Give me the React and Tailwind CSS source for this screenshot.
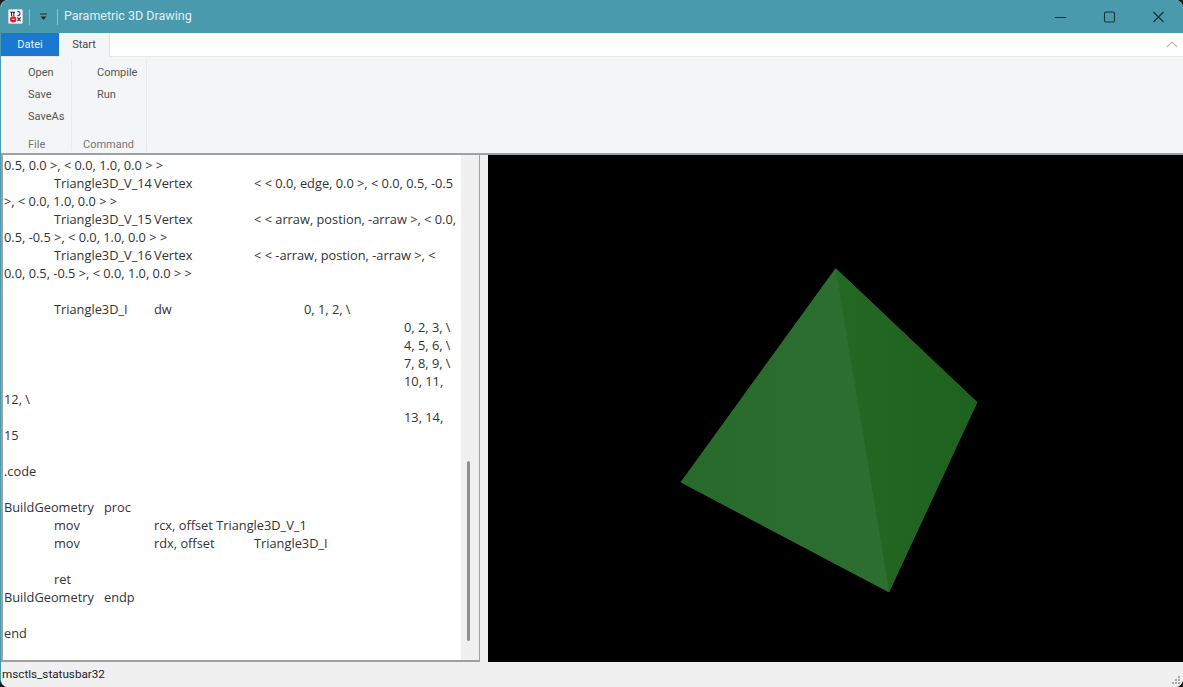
import React from "react";

const code = [
  "0.5, 0.0 >, < 0.0, 1.0, 0.0 > >",
  "\tTriangle3D_V_14\tVertex\t\t< < 0.0, edge, 0.0 >, < 0.0, 0.5, -0.5",
  ">, < 0.0, 1.0, 0.0 > >",
  "\tTriangle3D_V_15\tVertex\t\t< < arraw, postion, -arraw >, < 0.0,",
  "0.5, -0.5 >, < 0.0, 1.0, 0.0 > >",
  "\tTriangle3D_V_16\tVertex\t\t< < -arraw, postion, -arraw >, <",
  "0.0, 0.5, -0.5 >, < 0.0, 1.0, 0.0 > >",
  "",
  "\tTriangle3D_I\tdw\t\t\t0, 1, 2, \\",
  "\t\t\t\t\t\t\t\t0, 2, 3, \\",
  "\t\t\t\t\t\t\t\t4, 5, 6, \\",
  "\t\t\t\t\t\t\t\t7, 8, 9, \\",
  "\t\t\t\t\t\t\t\t10, 11,",
  "12, \\",
  "\t\t\t\t\t\t\t\t13, 14,",
  "15",
  "",
  ".code",
  "",
  "BuildGeometry\tproc",
  "\tmov\t\trcx, offset Triangle3D_V_1",
  "\tmov\t\trdx, offset\tTriangle3D_I",
  "",
  "\tret",
  "BuildGeometry\tendp",
  "",
  "end",
];

const AppIcon = () => (
  <svg width="15" height="15" viewBox="0 0 16 16">
    <rect x="0.5" y="0.5" width="15" height="15" rx="1.5" fill="#f4f4f6" stroke="#c9d3dc" />
    <path d="M2.5 3.5h5M3.8 3.5v4M6.2 3.5v4" stroke="#222" strokeWidth="1.1" fill="none" />
    <path d="M10 2.5c2.5 0 3.5 2 2.5 3.5-.6.9-1.5 1.2-2.5 1" stroke="#2b3fb5" strokeWidth="1.2" fill="none" />
    <circle cx="5.5" cy="11" r="3.4" fill="#e0202c" />
    <path d="M4 11h3" stroke="#fff" strokeWidth="1" />
    <path d="M10 9l3.5 4M13.5 9L10 13" stroke="#333" strokeWidth="1.2" />
  </svg>
);

const TitleBar = () => (
  <div className="flex h-[33px] shrink-0 items-center bg-[#4a9aad] text-[12.5px] text-[#e2f0f3]">
    <div className="ml-[7px] flex w-[15px] justify-center">
      <AppIcon />
    </div>
    <div className="ml-[6px] h-[16px] w-px bg-[#8fc0cc]" />
    <svg className="ml-[9px]" width="9" height="8" viewBox="0 0 9 8">
      <path d="M1 1h7" stroke="#1c2b30" />
      <path d="M1.5 3.5h6L4.5 7z" fill="#1c2b30" />
    </svg>
    <div className="ml-[9px] h-[16px] w-px bg-[#8fc0cc]" />
    <span className="ml-[6px]">Parametric 3D Drawing</span>
    <div className="ml-auto flex items-center">
      <svg width="49" height="12" viewBox="0 0 49 12">
        <path d="M19 6.5h11" stroke="#17323b" strokeWidth="1" />
      </svg>
      <svg width="49" height="12" viewBox="0 0 49 12">
        <rect x="19.5" y="1" width="10" height="10" rx="1.5" fill="none" stroke="#17323b" strokeWidth="1.1" />
      </svg>
      <svg width="49" height="12" viewBox="0 0 49 12">
        <path d="M19.5 1l10 10M29.5 1l-10 10" stroke="#17323b" strokeWidth="1.1" />
      </svg>
    </div>
  </div>
);

const TabStrip = () => (
  <div className="flex h-[24px] shrink-0 border-b border-[#e4e5e7] bg-white text-[11px]">
    <div className="flex w-[58px] items-center justify-center bg-[#1a78d0] pt-px text-[#eaf3fb]">Datei</div>
    <div className="-mb-px flex w-[51px] items-center justify-center border-r border-[#e4e5e7] bg-[#f4f5f7] pt-px text-[#444]">
      Start
    </div>
    <svg className="ml-auto mr-[5px] mt-[8px]" width="12" height="7" viewBox="0 0 12 7">
      <path d="M1 6l5-5 5 5" fill="none" stroke="#b5b5b5" strokeWidth="1.1" />
    </svg>
  </div>
);

const RibbonGroup = ({ items, label, width, itemLeft, labelLeft }) => (
  <div className={`flex h-full flex-col border-r border-[#e8e9eb] pt-[3px] ${width}`}>
    <div className={`flex flex-1 flex-col text-[#555] ${itemLeft}`}>
      {items.map((item) => (
        <div key={item} className="flex h-[22px] items-center">
          {item}
        </div>
      ))}
    </div>
    <div className={`flex h-[14px] items-center pt-[2px] text-[#777] ${labelLeft}`}>{label}</div>
  </div>
);

const Ribbon = () => (
  <div className="flex h-[96px] shrink-0 bg-[#f4f5f7] py-[2px] text-[11px]">
    <RibbonGroup items={["Open", "Save", "SaveAs"]} label="File" width="w-[71px]" itemLeft="pl-[27px]" labelLeft="pl-[27px]" />
    <RibbonGroup items={["Compile", "Run"]} label="Command" width="w-[75px]" itemLeft="pl-[25px]" labelLeft="pl-[11px]" />
  </div>
);

const Editor = () => (
  <div className="flex h-full w-[479px] shrink-0 border-b-2 border-l-2 border-r border-[#a0a0a0] bg-white">
    <div className="min-w-0 flex-1 pl-px pt-px">
      {code.map((line, i) => (
        <div key={i} className="h-[18px] whitespace-pre font-['Open_Sans',sans-serif] text-[12.8px] leading-[18px] text-[#333] [tab-size:50px]">
          {line}
        </div>
      ))}
    </div>
    <div className="flex w-[18px] shrink-0 justify-center bg-[#f0f0f0] pr-[3px] pt-[306px]">
      <div className="h-[180px] w-[3px] rounded-full bg-[#8f8f8f]" />
    </div>
  </div>
);

const Viewport = () => (
  <div className="ml-[8px] h-full flex-1 bg-black">
    <svg className="block h-full w-full" viewBox="0 0 695 507">
      <defs>
        <linearGradient id="leftFace" x1="0" y1="0" x2="1" y2="0">
          <stop offset="0" stopColor="#286a2c" />
          <stop offset="1" stopColor="#2d6f31" />
        </linearGradient>
        <linearGradient id="rightFace" x1="0" y1="0" x2="1" y2="0">
          <stop offset="0" stopColor="#246826" />
          <stop offset="1" stopColor="#1f611f" />
        </linearGradient>
      </defs>
      <polygon points="347.7,113.3 192.7,327.3 401,437.3 489.3,247.3" fill="#246826" />
      <polygon points="347.7,113.3 489.3,247.3 401,437.3" fill="url(#rightFace)" />
      <polygon points="347.7,113.3 192.7,327.3 401,437.3" fill="url(#leftFace)" />
    </svg>
  </div>
);

const StatusBar = () => (
  <div className="relative flex h-[25px] shrink-0 items-center bg-[#f0f0f0] pl-px pt-px text-[11.7px] text-[#222]">
    msctls_statusbar32
    <svg className="absolute bottom-[2px] right-[2px]" width="10" height="10" viewBox="0 0 10 10" fill="#a8a8a8">
      <rect x="7" y="1" width="2" height="2" />
      <rect x="4" y="4" width="2" height="2" />
      <rect x="7" y="4" width="2" height="2" />
      <rect x="1" y="7" width="2" height="2" />
      <rect x="4" y="7" width="2" height="2" />
      <rect x="7" y="7" width="2" height="2" />
    </svg>
  </div>
);

const App = () => {
  return (
    <div className="h-[687px] w-[1183px] overflow-hidden bg-[#1c1c1c] font-['Roboto','Liberation_Sans',sans-serif]">
      <div className="flex h-full flex-col overflow-hidden rounded-[8px] border-l border-[#4a9aad] bg-[#f0f0f0]">
        <TitleBar />
        <TabStrip />
        <Ribbon />
        <div className="h-[2px] shrink-0 bg-[#a0a0a0]" />
        <div className="flex min-h-0 flex-1">
          <Editor />
          <Viewport />
        </div>
        <StatusBar />
      </div>
    </div>
  );
};

export default App;
